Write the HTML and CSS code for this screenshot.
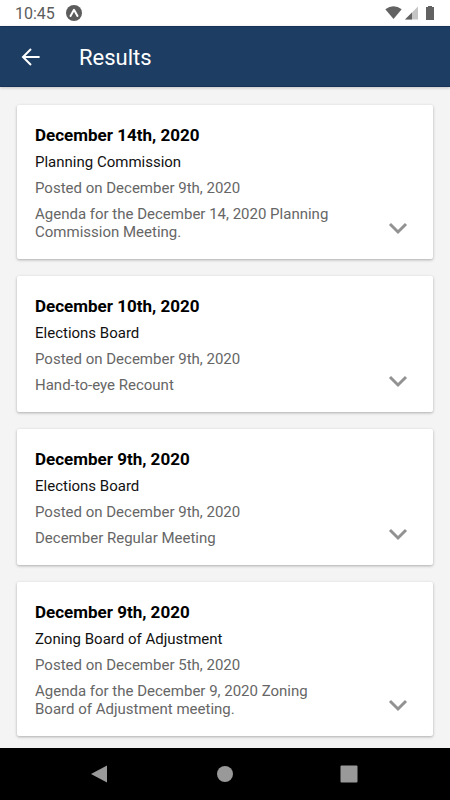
FILE: index.html
```html
<!DOCTYPE html>
<html lang="en">
<head>
  <meta charset="UTF-8">
  <meta name="viewport" content="width=device-width, initial-scale=1.0">
  <title>Results</title>
  <link rel="stylesheet" href="styles.css">
</head>
<body>

<div class="status-bar">
  <span class="time">10:45</span>
  <svg class="app-icon" width="16" height="16" viewBox="0 0 16 16">
    <circle cx="8" cy="8" r="8" fill="#5c5c5c"/>
    <path d="M4.5 11 L8 4.8 L11.5 11" fill="none" stroke="#fff" stroke-width="2" stroke-linecap="round" stroke-linejoin="round"/>
  </svg>
  <svg class="status-icons" width="50" height="16" viewBox="0 0 50 16">
    <path d="M0.3 4.2 Q8.5 -1.8 16.7 4.2 L8.5 14 Z" fill="#626262"/>
    <path d="M33 1.5 V14.5 H20 Z" fill="#c4c4c4"/>
    <path d="M27 7.5 V14.5 H20 Z" fill="#626262"/>
    <path d="M43 1 H47 V2 H49 V15 H41 V2 H43 Z" fill="#626262"/>
  </svg>
</div>

<header class="header">
  <button class="back" aria-label="Back">
    <svg width="20" height="20" viewBox="0 0 20 20">
      <path d="M18.6 10 H2.5 M10 2 L2 10 L10 18" fill="none" stroke="#fff" stroke-width="2"/>
    </svg>
  </button>
  <h1>Results</h1>
</header>

<main class="results">
  <article class="card">
    <div class="info">
      <h2>December 14th, 2020</h2>
      <p class="board">Planning Commission</p>
      <p>Posted on December 9th, 2020</p>
      <p>Agenda for the December 14, 2020 Planning Commission Meeting.</p>
    </div>
    <button class="expand" aria-label="Expand">
      <svg width="24" height="24" viewBox="0 0 24 24"><path d="M4 8 L12 16 L20 8"/></svg>
    </button>
  </article>

  <article class="card">
    <div class="info">
      <h2>December 10th, 2020</h2>
      <p class="board">Elections Board</p>
      <p>Posted on December 9th, 2020</p>
      <p>Hand-to-eye Recount</p>
    </div>
    <button class="expand" aria-label="Expand">
      <svg width="24" height="24" viewBox="0 0 24 24"><path d="M4 8 L12 16 L20 8"/></svg>
    </button>
  </article>

  <article class="card">
    <div class="info">
      <h2>December 9th, 2020</h2>
      <p class="board">Elections Board</p>
      <p>Posted on December 9th, 2020</p>
      <p>December Regular Meeting</p>
    </div>
    <button class="expand" aria-label="Expand">
      <svg width="24" height="24" viewBox="0 0 24 24"><path d="M4 8 L12 16 L20 8"/></svg>
    </button>
  </article>

  <article class="card">
    <div class="info">
      <h2>December 9th, 2020</h2>
      <p class="board">Zoning Board of Adjustment</p>
      <p>Posted on December 5th, 2020</p>
      <p>Agenda for the December 9, 2020 Zoning Board of Adjustment meeting.</p>
    </div>
    <button class="expand" aria-label="Expand">
      <svg width="24" height="24" viewBox="0 0 24 24"><path d="M4 8 L12 16 L20 8"/></svg>
    </button>
  </article>
</main>

<nav class="nav-bar">
  <button aria-label="Back">
    <svg width="18" height="18" viewBox="0 0 18 18"><path d="M-1 9 L15 0.5 V17.5 Z"/></svg>
  </button>
  <button aria-label="Home">
    <svg width="18" height="18" viewBox="0 0 18 18"><circle cx="9" cy="9" r="8"/></svg>
  </button>
  <button aria-label="Overview">
    <svg width="18" height="18" viewBox="0 0 18 18"><rect x="0.5" y="0.5" width="17" height="17" rx="1"/></svg>
  </button>
</nav>

</body>
</html>
```
FILE: styles.css
```css
* { box-sizing: border-box; }
body { font-family: Roboto, sans-serif; background-color: #f4f4f4; display: flex; flex-direction: column; height: 100vh; margin: 0; }
h1, h2, p { margin: 0; }
button { background: none; border: none; padding: 0; cursor: pointer; }
svg { display: block; overflow: visible; }

.status-bar { background-color: #fff; display: flex; align-items: center; height: 26px; padding: 0 15px; flex: none; }
.time { font-size: 16px; line-height: 24px; color: #5c5c5c; padding-top: 2px; }
.app-icon { margin-left: 11px; }
.status-icons { margin-left: auto; }

.header { background-color: #1e3d62; border-top: 1px solid #17335a; border-bottom: 1px solid #17335a; box-shadow: 0 1px 3px rgba(0, 0, 0, 0.2); display: flex; align-items: center; gap: 38px; height: 61px; padding: 0 21px; flex: none; }
.header h1 { color: #fff; font-size: 22px; font-weight: 400; line-height: 24px; padding-top: 3px; }

.results { display: flex; flex-direction: column; gap: 17px; padding: 18px 17px 0; flex: 1; min-height: 0; overflow: auto; scrollbar-width: none; }
.card { background-color: #fff; border-radius: 2px; box-shadow: 0 1px 3px rgba(0, 0, 0, 0.3); display: flex; align-items: flex-end; gap: 36px; padding: 20px 23px 18px 18px; flex: none; }
.info { display: flex; flex-direction: column; gap: 8px; flex: 1; }
.info h2 { font-size: 17px; font-weight: 700; line-height: 20px; color: #000; }
.info p { font-size: 15px; font-weight: 400; line-height: 18px; color: #666; }
.info .board { color: #111; }
.expand { padding-bottom: 1px; }
.expand path { fill: none; stroke: #929292; stroke-width: 3; }

.nav-bar { background-color: #000; display: flex; justify-content: space-between; align-items: center; height: 52px; padding: 0 92px 1px; flex: none; }
.nav-bar svg { fill: #999; }
```
